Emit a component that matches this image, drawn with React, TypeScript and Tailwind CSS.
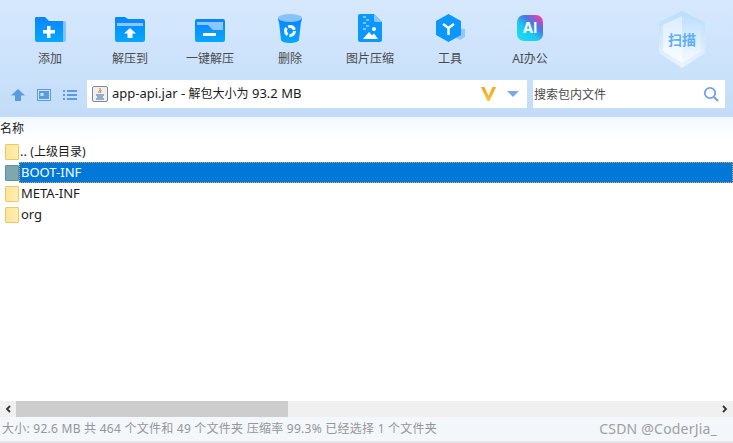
import { ReactNode } from "react";

const font = "font-['Noto_Sans','Noto_Sans_CJK_SC',sans-serif]";

function AddIcon() {
  return (
    <svg width="31" height="25" viewBox="0 0 31 25">
      <defs>
        <linearGradient id="blue1" x1="0" y1="0" x2="0" y2="1">
          <stop offset="0" stopColor="#0a84ff" />
          <stop offset="1" stopColor="#05a8ff" />
        </linearGradient>
      </defs>
      <path d="M26 4h3a2 2 0 0 1 2 2v17a2 2 0 0 1-2 2h-3z" fill="#86c2ff" />
      <path d="M1 0h9l4 4h14v21H2a2 2 0 0 1-2-2V1a1 1 0 0 1 1-1z" fill="url(#blue1)" />
      <path d="M12 9h3.500v4H20v3.500h-4.500V21H12v-4.500H8V13h4z" fill="#fff" />
    </svg>
  );
}

function ExtractIcon() {
  return (
    <svg width="30" height="25" viewBox="0 0 30 25">
      <path d="M1 0h9l3 2h15a2 2 0 0 1 2 2v19a2 2 0 0 1-2 2H2a2 2 0 0 1-2-2V1a1 1 0 0 1 1-1z" fill="url(#blue1)" />
      <rect x="2" y="6" width="26" height="3" fill="#8cc6ff" />
      <path d="M15 11l6 5.500h-3.500V21h-5v-4.500H9z" fill="#fff" />
    </svg>
  );
}

function OneClickIcon() {
  return (
    <svg width="30" height="23" viewBox="0 0 30 23">
      <rect width="30" height="23" rx="2" fill="url(#blue1)" />
      <path d="M2 3H28V11H18L13 6H2z" fill="#8cc6ff" />
      <rect x="8" y="14" width="13" height="3" rx="0.500" fill="#fff" />
    </svg>
  );
}

function TrashIcon() {
  return (
    <svg width="24" height="29" viewBox="0 0 24 29">
      <path d="M0 4c0 3 1 4 1 4l2 18c1 4 17 4 18 0l2-18s1-1 1-4z" fill="url(#blue1)" />
      <ellipse cx="12" cy="4" rx="12" ry="4" fill="#86c2ff" />
      <circle cx="12" cy="17" r="4.500" fill="none" stroke="#fff" strokeWidth="3" strokeDasharray="7.500 1.920" />
    </svg>
  );
}

function ImageIcon() {
  return (
    <svg width="24" height="28" viewBox="0 0 24 28">
      <path d="M2 0h14l8 8v18a2 2 0 0 1-2 2H2a2 2 0 0 1-2-2V2a2 2 0 0 1 2-2z" fill="#0a98ff" />
      <path d="M16 0l8 8h-6a2 2 0 0 1-2-2z" fill="#8cc6ff" />
      <path d="M5 2h3v2H5zM8 5h3v2H8zM5 8h3v2H5zM8 11h3v2H8zM5 14h3v2H5z" fill="#7cc2ff" />
      <path d="M5 25l6-7 3 3.500 2-2 4 5.500z" fill="#fff" />
      <circle cx="16" cy="15" r="2" fill="#fff" />
    </svg>
  );
}

function ToolsIcon() {
  return (
    <svg width="29" height="28" viewBox="0 0 29 28">
      <path d="M22 14l7 1v8l-5 3-4-2z" fill="#90c8ff" />
      <path d="M12.500 0L25 7v14l-12.500 7L0 21V7z" fill="#0a98ff" />
      <path d="M7 10l5.500 4 5.500-4M12.500 14v7" stroke="#fff" strokeWidth="2.400" fill="none" />
    </svg>
  );
}

function AiIcon() {
  return (
    <div className="mb-px flex h-[26px] w-[26px] items-center justify-center rounded-[7px] bg-[linear-gradient(40deg,#1ae0f0_0%,#1cc8f2_40%,#4a78e4_65%,#e83fb0_90%)]">
      <span className="font-['Inter',sans-serif] text-[14px] font-bold leading-none text-white">AI</span>
    </div>
  );
}

function ToolButton({ icon, label }: { icon: ReactNode; label: string }) {
  return (
    <div className="flex w-20 flex-col items-center">
      <div className="flex h-[31px] items-end justify-center">{icon}</div>
      <span className="mt-[9px] text-xs leading-[16px] text-[#4a4a4a]">{label}</span>
    </div>
  );
}

function Folder({ dark }: { dark?: boolean }) {
  return (
    <div
      className={`h-[16px] w-[14px] rounded-[1px] border ${
        dark ? "border-[#5f8f9a] bg-[#7fa8ae]" : "border-[#ecc868] bg-[linear-gradient(90deg,#fde49a,#ffeeb0)]"
      }`}
    />
  );
}

function Row({ children, selected }: { children: ReactNode; selected?: boolean }) {
  return (
    <div className="flex h-[21px] items-center pl-[5px]">
      <Folder dark={selected} />
      <div
        className={`flex h-[21px] flex-1 items-center text-[13px] ${
          selected ? "border border-dotted border-[#f0a050] bg-[#0078d7] pl-px text-white" : "pl-[2px] text-[#1a1a1a]"
        }`}
      >
        {children}
      </div>
    </div>
  );
}

export default function App() {
  return (
    <div className={`flex h-[443px] w-[733px] flex-col overflow-hidden bg-white ${font}`}>
      {/* toolbar */}
      <div className="relative flex h-[117px] flex-col bg-[linear-gradient(180deg,#d6e8fd,#cbe2fb_60%,#c2dcf7)]">
        <div className="flex h-[75px] items-start pl-[10px] pt-[11px]">
          <ToolButton icon={<AddIcon />} label="添加" />
          <ToolButton icon={<ExtractIcon />} label="解压到" />
          <ToolButton icon={<OneClickIcon />} label="一键解压" />
          <ToolButton icon={<div className="-mb-px"><TrashIcon /></div>} label="删除" />
          <ToolButton icon={<ImageIcon />} label="图片压缩" />
          <ToolButton icon={<ToolsIcon />} label="工具" />
          <ToolButton icon={<AiIcon />} label="AI办公" />
        </div>

        {/* scan badge */}
        <div className="absolute left-[659px] top-[11px]">
          <svg width="46" height="57" viewBox="0 0 46 57">
            <defs>
              <linearGradient id="hexOuter" x1="0" y1="0" x2="0" y2="1">
                <stop offset="0" stopColor="#b9defc" />
                <stop offset="1" stopColor="#eaf5ff" />
              </linearGradient>
              <linearGradient id="hexLeft" x1="0" y1="0" x2="0" y2="1">
                <stop offset="0" stopColor="#dcedfe" />
                <stop offset="1" stopColor="#fbfdff" />
              </linearGradient>
              <linearGradient id="hexRight" x1="0" y1="0" x2="0" y2="1">
                <stop offset="0" stopColor="#bfe0fd" />
                <stop offset="1" stopColor="#f6fbff" />
              </linearGradient>
            </defs>
            <path d="M23 0l23 11v31L23 57 0 42V11z" fill="url(#hexOuter)" />
            <path d="M23 5L4 14v26l19 12z" fill="url(#hexLeft)" />
            <path d="M23 5l19 9v26L23 52z" fill="url(#hexRight)" />
          </svg>
          <span className="absolute left-[9px] top-[19px] whitespace-nowrap text-[14px] font-bold leading-[20px] text-[#62aef2]">
            扫描
          </span>
        </div>

        {/* address row */}
        <div className="flex h-[42px] items-start pt-[5px]">
          <div className="flex h-[28px] w-[87px] items-center pl-[11px] pt-[2px]">
            <svg width="14" height="12" viewBox="0 0 14 12">
              <path d="M7 0l7 6.500H10V12H4V6.500H0z" fill="#5b9be0" />
            </svg>
            <svg className="ml-[12px]" width="14" height="12" viewBox="0 0 14 12">
              <rect x="0.500" y="0.500" width="13" height="11" fill="#cfe3f8" stroke="#5b9be0" />
              <rect x="2" y="2" width="10" height="8" fill="#5b9be0" />
              <rect x="3.500" y="4" width="3" height="3" fill="#cfe3f8" />
            </svg>
            <svg className="ml-[12px]" width="14" height="12" viewBox="0 0 14 12">
              <path d="M0 1h2v2H0zM4 1h10v2H4zM0 5h2v2H0zM4 5h10v2H4zM0 9h2v2H0zM4 9h10v2H4z" fill="#5b9be0" />
            </svg>
          </div>
          <div className="flex h-[28px] w-[440px] items-center bg-white pl-[5px] pr-[8px]">
            <div className="flex h-[16px] w-[16px] items-center justify-center rounded-[2px] border border-[#7d8a96] bg-[#f0f0f0]">
              <svg width="10" height="12" viewBox="0 0 10 12">
                <path d="M5 0c1 2-2 3-1 5M6 2c0 1-1 2 0 3" stroke="#d9681e" strokeWidth="1" fill="none" />
                <path d="M1 7h8M2 9h6M1 11h8" stroke="#3b6ea5" strokeWidth="1" />
              </svg>
            </div>
            <span className="ml-[4px] text-[13px] text-[#1a1a1a]">
              app-api.jar - <span className="text-xs">解包大小为</span> 93.2 MB
            </span>
            <svg className="ml-auto" width="15" height="14" viewBox="0 0 15 14">
              <defs>
                <linearGradient id="vee" x1="0" y1="0" x2="0" y2="1">
                  <stop offset="0" stopColor="#f7a21b" />
                  <stop offset="1" stopColor="#fbc531" />
                </linearGradient>
              </defs>
              <path d="M0 0h3.500l4 9 4-9H15L8.500 14h-2z" fill="url(#vee)" />
            </svg>
            <svg className="ml-[11px]" width="12" height="6" viewBox="0 0 12 6">
              <path d="M0 0h12L6 6z" fill="#7aa9e6" />
            </svg>
          </div>
          <div className="ml-[6px] flex h-[28px] w-[192px] items-center bg-white pl-px pr-[6px]">
            <span className="pt-[2px] text-xs text-[#4a4a4a]">搜索包内文件</span>
            <svg className="ml-auto" width="16" height="16" viewBox="0 0 16 16">
              <circle cx="7" cy="7" r="5.200" fill="none" stroke="#6fa4e2" strokeWidth="1.800" />
              <path d="M11 11l4 4" stroke="#6fa4e2" strokeWidth="2.200" />
            </svg>
          </div>
        </div>
      </div>

      {/* list header */}
      <div className="flex h-[24px] items-center bg-[linear-gradient(180deg,#f2f8ff,#ffffff)] text-xs text-[#1a1a1a]">名称</div>

      {/* file list */}
      <div className="flex flex-1 flex-col">
        <Row>
          <span className="-ml-px">.. <span className="text-xs">(上级目录)</span></span>
        </Row>
        <Row selected>BOOT-INF</Row>
        <Row>META-INF</Row>
        <Row>org</Row>
      </div>

      {/* horizontal scrollbar */}
      <div className="flex h-[16px] items-center bg-[#f0f0f0]">
        <div className="flex w-[16px] justify-center">
          <svg width="6" height="8" viewBox="0 0 6 8">
            <path d="M5 1L2 4l3 3" fill="none" stroke="#333" strokeWidth="1.800" />
          </svg>
        </div>
        <div className="h-full w-[272px] bg-[#cdcdcd]" />
        <div className="ml-auto flex w-[16px] justify-center">
          <svg width="6" height="8" viewBox="0 0 6 8">
            <path d="M1 1l3 3-3 3" fill="none" stroke="#333" strokeWidth="1.800" />
          </svg>
        </div>
      </div>

      {/* status bar */}
      <div className="flex h-[24px] items-center justify-between bg-[#f3f6fb] pl-[2px] pr-[16px] text-xs text-[#969696]">
        <span className="tracking-[0.25px]">大小: 92.6 MB 共 464 个文件和 49 个文件夹 压缩率 99.3% 已经选择 1 个文件夹</span>
        <span className="text-[14px] tracking-[0.2px] text-[#a0a0a0]">CSDN @CoderJia_</span>
      </div>
      <div className="h-[2px] bg-[#e6e6e6]" />
    </div>
  );
}
